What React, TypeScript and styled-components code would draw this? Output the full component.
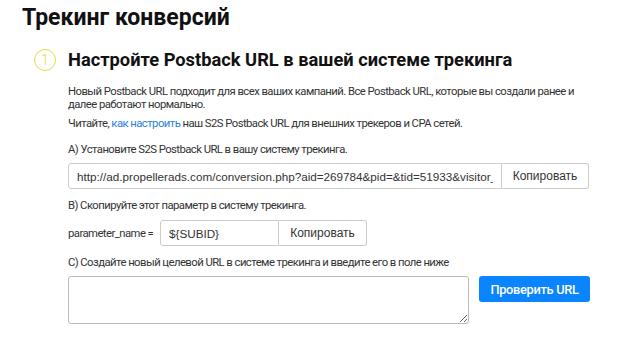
import React from "react";
import styled, { createGlobalStyle } from "styled-components";

const Global = createGlobalStyle`
  html, body { margin: 0; padding: 0; background: #fff; }
  body { font-family: Roboto, "Noto Sans", sans-serif; color: #333; }
  * { box-sizing: border-box; }
`;

const Page = styled.div`
  padding: 3px 0 0 22px;
  width: 623px;
  height: 341px;
  overflow: hidden;
`;

const Title = styled.h1`
  margin: 0;
  font-size: 23px;
  line-height: 30px;
  font-weight: 700;
  color: #111;
`;

const Step = styled.section`
  margin-top: 15px;
  padding-left: 12px;
`;

const StepHead = styled.div`
  display: flex;
  align-items: center;
  gap: 12px;
`;

const Circle = styled.div`
  width: 22px;
  height: 22px;
  border-radius: 50%;
  border: 1.5px solid #e0e03a;
  color: #e0e03a;
  display: flex;
  align-items: center;
  justify-content: center;
  font-size: 15px;
  font-weight: 300;
  flex: none;
`;

const StepTitle = styled.h2`
  margin: 0;
  font-size: 18.3px;
  line-height: 24px;
  font-weight: 700;
  color: #111;
`;

const Body = styled.div`
  padding-left: 34px;
  margin-top: 13px;
  display: flex;
  flex-direction: column;
`;

const Text = styled.p<{ $mt?: number }>`
  margin: ${(p) => p.$mt ?? 0}px 0 0;
  font-size: 11.3px;
  letter-spacing: -0.55px;
  line-height: 13px;
  color: #333;
  white-space: nowrap;
`;

const Link = styled.a`
  color: #2b7fe0;
  text-decoration: none;
`;

const Row = styled.div<{ $mt?: number }>`
  display: flex;
  align-items: center;
  margin-top: ${(p) => p.$mt ?? 0}px;
`;

const Field = styled.input<{ $w: number }>`
  width: ${(p) => p.$w}px;
  height: 26px;
  border: 1px solid #ccc;
  border-radius: 3px 0 0 3px;
  padding: 0 8px;
  margin: 0;
  font-family: "Liberation Sans", Arial, sans-serif;
  font-size: 11.7px;
  color: #333;
  background: #fff;
  outline: none;
`;

const CopyButton = styled.button<{ $w: number }>`
  width: ${(p) => p.$w}px;
  height: 26px;
  border: 1px solid #ccc;
  border-left: none;
  border-radius: 0 3px 3px 0;
  background: #fff;
  font-family: "Liberation Sans", Arial, sans-serif;
  font-size: 12px;
  color: #333;
  padding: 0;
`;

const ParamLabel = styled.span`
  font-size: 11.3px;
  letter-spacing: -0.55px;
  color: #333;
  width: 92px;
  white-space: nowrap;
`;

const TextArea = styled.textarea`
  width: 401px;
  height: 48px;
  border: 1px solid #bbb;
  border-radius: 3px;
  resize: vertical;
  margin: 0;
  display: block;
`;

const CheckButton = styled.button`
  margin-left: 10px;
  width: 111px;
  height: 26px;
  background: #0a84ff;
  color: #fff;
  border: none;
  border-radius: 3px;
  font-family: Roboto, sans-serif;
  font-size: 12.8px;
  letter-spacing: -0.3px;
  font-weight: 500;
  padding: 0;
`;

const TopRow = styled.div<{ $mt?: number }>`
  display: flex;
  align-items: flex-start;
  margin-top: ${(p) => p.$mt ?? 0}px;
`;

const postback =
  "http://ad.propellerads.com/conversion.php?aid=269784&pid=&tid=51933&visitor_id=${SUBID}";

export default function App() {
  return (
    <>
      <Global />
      <Page>
        <Title>Трекинг конверсий</Title>
        <Step>
          <StepHead>
            <Circle>1</Circle>
            <StepTitle>Настройте Postback URL в вашей системе трекинга</StepTitle>
          </StepHead>
          <Body>
            <Text>
              Новый Postback URL подходит для всех ваших кампаний. Все Postback URL, которые вы создали ранее и
              <br />
              далее работают нормально.
            </Text>
            <Text $mt={6}>
              Читайте, <Link href="#">как настроить</Link> наш S2S Postback URL для внешних трекеров и CPA сетей.
            </Text>
            <Text $mt={13}>A) Установите S2S Postback URL в вашу систему трекинга.</Text>
            <Row $mt={7}>
              <Field $w={434} readOnly value={postback} />
              <CopyButton $w={87}>Копировать</CopyButton>
            </Row>
            <Text $mt={10}>B) Скопируйте этот параметр в систему трекинга.</Text>
            <Row $mt={8}>
              <ParamLabel>parameter_name =</ParamLabel>
              <Field $w={119} readOnly value={"${SUBID}"} />
              <CopyButton $w={88}>Копировать</CopyButton>
            </Row>
            <Text $mt={10}>C) Создайте новый целевой URL в системе трекинга и введите его в поле ниже</Text>
            <TopRow $mt={7}>
              <TextArea />
              <CheckButton>Проверить URL</CheckButton>
            </TopRow>
          </Body>
        </Step>
      </Page>
    </>
  );
}
